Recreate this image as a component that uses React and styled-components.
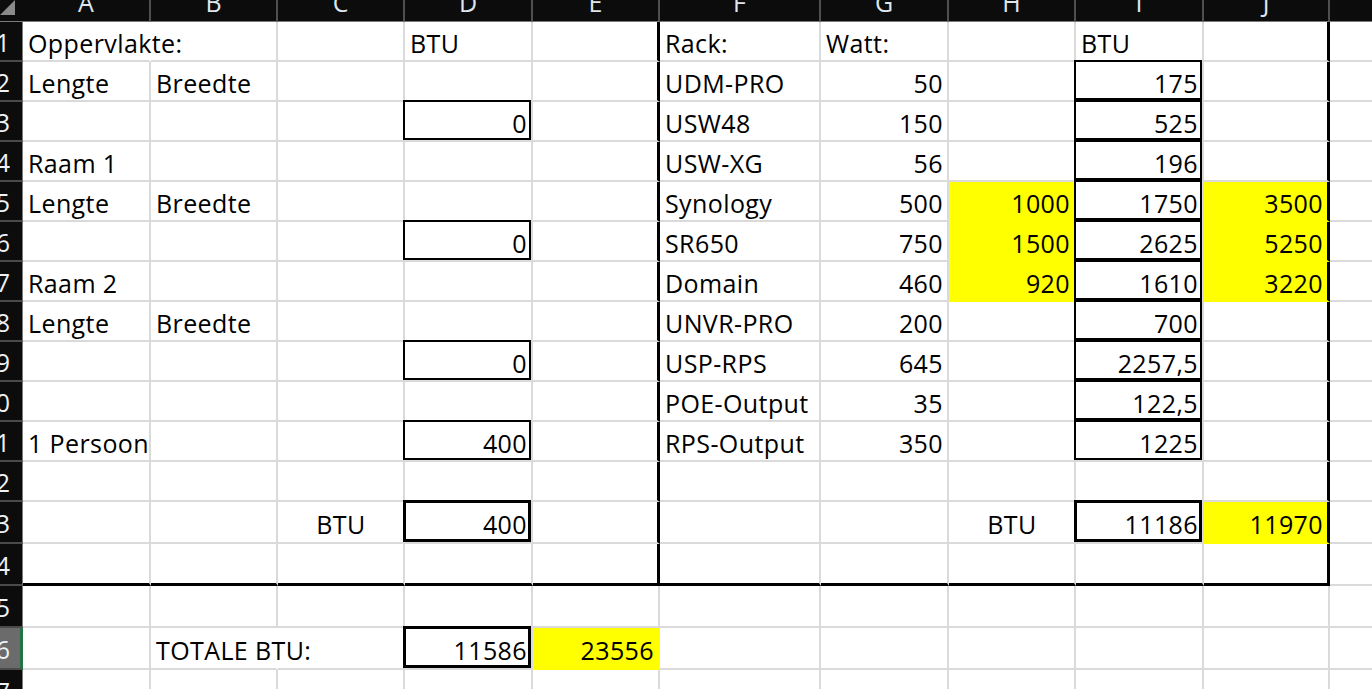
import React from "react";
import styled, { createGlobalStyle, css } from "styled-components";

const GlobalStyle = createGlobalStyle`
  html, body { margin: 0; padding: 0; background: #fff; overflow: hidden; }
  #root { width: 1372px; height: 689px; overflow: hidden; }
`;

const COLS = ["A", "B", "C", "D", "E", "F", "G", "H", "I", "J", "K"];
const WIDTHS = [128, 127, 127, 128, 127, 161, 128, 127, 128, 126, 128];
const ROW_COUNT = 17;

// cell helpers: text (left), number (right), centered
const t = (v, o = {}) => ({ v, align: "l", ...o });
const n = (v, o = {}) => ({ v, align: "r", ...o });
const c = (v, o = {}) => ({ v, align: "c", ...o });

const data = {
  1: { A: t("Oppervlakte:", { spill: true }), D: t("BTU"), F: t("Rack:"), G: t("Watt:"), I: t("BTU") },
  2: { A: t("Lengte"), B: t("Breedte"), F: t("UDM-PRO"), G: n("50"), I: n("175", { box: "thin" }) },
  3: { D: n("0", { box: "thin" }), F: t("USW48"), G: n("150"), I: n("525", { box: "thin" }) },
  4: { A: t("Raam 1"), F: t("USW-XG"), G: n("56"), I: n("196", { box: "thin" }) },
  5: {
    A: t("Lengte"), B: t("Breedte"), F: t("Synology"), G: n("500"),
    H: n("1000", { fill: true }), I: n("1750", { box: "thin" }), J: n("3500", { fill: true }),
  },
  6: {
    D: n("0", { box: "thin" }), F: t("SR650"), G: n("750"),
    H: n("1500", { fill: true }), I: n("2625", { box: "thin" }), J: n("5250", { fill: true }),
  },
  7: {
    A: t("Raam 2"), F: t("Domain"), G: n("460"),
    H: n("920", { fill: true }), I: n("1610", { box: "thin" }), J: n("3220", { fill: true }),
  },
  8: { A: t("Lengte"), B: t("Breedte"), F: t("UNVR-PRO"), G: n("200"), I: n("700", { box: "thin" }) },
  9: { D: n("0", { box: "thin" }), F: t("USP-RPS"), G: n("645"), I: n("2257,5", { box: "thin" }) },
  10: { F: t("POE-Output"), G: n("35"), I: n("122,5", { box: "thin" }) },
  11: {
    A: t("1 Persoon"), D: n("400", { box: "thin" }), F: t("RPS-Output"), G: n("350"),
    I: n("1225", { box: "thin" }),
  },
  13: {
    C: c("BTU"), D: n("400", { box: "thick" }), H: c("BTU"),
    I: n("11186", { box: "thick" }), J: n("11970", { fill: true }),
  },
  16: { B: t("TOTALE BTU:", { spill: true }), D: n("11586", { box: "thick" }), E: n("23556", { fill: true }) },
};

const Sheet = styled.div`
  display: grid;
  grid-template-columns: 23px ${WIDTHS.map((w) => `${w}px`).join(" ")};
  grid-template-rows: 22px repeat(12, 40px) repeat(5, 42px);
  font-family: "Open Sans", "Noto Sans", sans-serif;
  font-size: 25px;
  color: #000;
`;

const Corner = styled.div`
  background: #0c0c0c;
  border-bottom: 1px solid #7a7a7a;
  box-sizing: border-box;
  svg { display: block; }
`;

const ColHead = styled.div`
  box-sizing: border-box;
  background: #0c0c0c;
  border-right: 2px solid #4f4f4f;
  border-bottom: 1px solid #7a7a7a;
  display: flex;
  justify-content: center;
  align-items: flex-end;
  overflow: hidden;
  color: #dfe6ee;

  span {
    line-height: 24px;
    margin-bottom: 7px;
  }
`;

const RowHead = styled.div`
  box-sizing: border-box;
  background: ${(p) => (p.$active ? "#6b6b6b" : "#0c0c0c")};
  border-bottom: 2px solid #4a4a4a;
  border-right: ${(p) => (p.$active ? "3px solid #217346" : "1px solid #7a7a7a")};
  display: flex;
  justify-content: flex-end;
  align-items: center;
  overflow: hidden;
  padding-right: ${(p) => (p.$active ? "10px" : "12px")};
  padding-top: 2px;
  color: #eef1f5;
  white-space: nowrap;
  line-height: 24px;
`;

const gridLine = "#dadada";
const yellow = "#ffff00";

const Cell = styled.div`
  position: relative;
  box-sizing: border-box;
  display: flex;
  align-items: center;
  justify-content: ${(p) =>
    p.$align === "r" ? "flex-end" : p.$align === "c" ? "center" : "flex-start"};
  padding: 3px 4px 0 5px;
  white-space: nowrap;
  line-height: 24px;
  letter-spacing: 0.4px;
  background: ${(p) => (p.$fill ? yellow : "transparent")};
  border-right: ${(p) =>
    p.$edgeRight
      ? "3px solid #000"
      : `2px solid ${p.$spill ? "transparent" : p.$fill ? yellow : gridLine}`};
  border-bottom: ${(p) =>
    p.$edgeBottom ? "3px solid #000" : `2px solid ${p.$fill ? yellow : gridLine}`};

  ${(p) =>
    p.$box &&
    css`
      &::after {
        content: "";
        position: absolute;
        inset: -2px 0 0 -2px;
        border: ${p.$box === "thick" ? "3px" : "2px"} solid #000;
        pointer-events: none;
      }
    `}
`;

const CornerMark = () => (
  <svg width="22" height="22" viewBox="0 0 22 22">
    <polygon points="15,0 15,15 0,15" fill="#8a8a8a" />
  </svg>
);

export default function App() {
  const cells = [];
  cells.push(
    <Corner key="corner">
      <CornerMark />
    </Corner>
  );
  COLS.forEach((col) =>
    cells.push(
      <ColHead key={`h-${col}`}>
        <span>{col}</span>
      </ColHead>
    )
  );

  for (let r = 1; r <= ROW_COUNT; r++) {
    cells.push(
      <RowHead key={`r-${r}`} $active={r === 16}>
        {r}
      </RowHead>
    );
    COLS.forEach((col, i) => {
      const spec = (data[r] && data[r][col]) || null;
      const inBlock = r <= 14 && i <= 9;
      cells.push(
        <Cell
          key={`${col}${r}`}
          $align={spec ? spec.align : "l"}
          $fill={spec && spec.fill}
          $box={spec && spec.box}
          $spill={spec && spec.spill}
          $edgeRight={inBlock && (col === "E" || col === "J")}
          $edgeBottom={r === 14 && i <= 9}
        >
          {spec ? spec.v : ""}
        </Cell>
      );
    });
  }

  return (
    <>
      <GlobalStyle />
      <Sheet>{cells}</Sheet>
    </>
  );
}
